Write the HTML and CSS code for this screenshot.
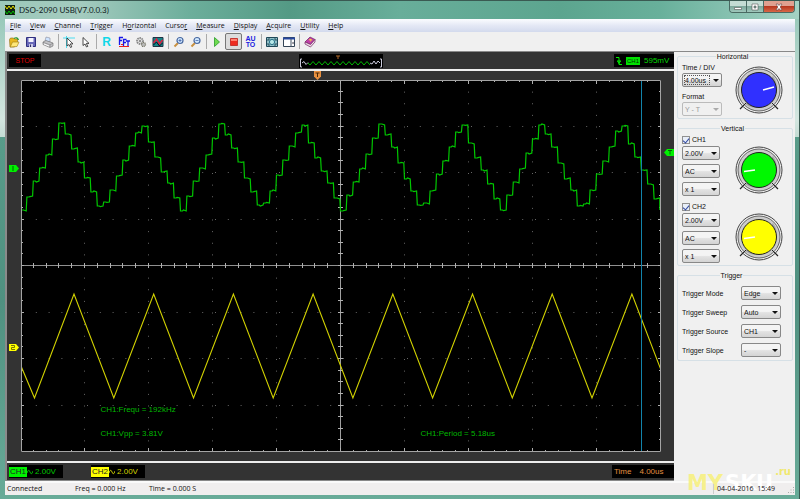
FILE: index.html
```html
<!DOCTYPE html>
<html lang="en">
<head>
<meta charset="utf-8">
<title>DSO-2090 USB(V7.0.0.3)</title>
<link rel="stylesheet" href="styles.css">
</head>
<body>
<div class="window">
  <header class="titlebar">
    <svg class="app-icon" viewBox="0 0 10 10"><rect width="10" height="10" fill="#102010"/><path d="M0 1l2 3 2-3 2 3 2-3 2 3" stroke="#e8e000" fill="none"/><path d="M0 6l2 3 2-3 2 3 2-3 2 3" stroke="#0b0" fill="none"/></svg>
    <h1>DSO-2090 USB(V7.0.0.3)</h1>
    <div class="window-buttons">
      <button aria-label="Minimize"><svg viewBox="0 0 10 8"><path d="M1.500 4.500h7v2h-7z" fill="#fff" stroke="#555" stroke-width=".6"/></svg></button>
      <button aria-label="Maximize"><svg viewBox="0 0 10 8"><path d="M2 1h6v6H2zM4 3h2v2H4z" fill="#fff" fill-rule="evenodd" stroke="#555" stroke-width=".6"/></svg></button>
      <button class="close" aria-label="Close"><svg viewBox="0 0 10 8"><path d="M2 1h2l1 1.500 1-1.500h2L6.200 4 8 7H6L5 5.500 4 7H2l1.800-3z" fill="#fff" stroke="#644" stroke-width=".6"/></svg></button>
    </div>
  </header>

  <nav class="menubar">
    <button><u>F</u>ile</button><button><u>V</u>iew</button><button><u>C</u>hannel</button><button><u>T</u>rigger</button><button>H<u>o</u>rizontal</button><button>Curso<u>r</u></button><button><u>M</u>easure</button><button><u>D</u>isplay</button><button><u>A</u>cquire</button><button><u>U</u>tility</button><button><u>H</u>elp</button>
  </nav>

  <div class="toolbar">
    <button aria-label="Open"><svg viewBox="0 0 12 12"><path d="M1.500 3.500l1-1.500h3l1 1 3 0v3l-3 5H2z" fill="#e8b820" stroke="#8a6a10" stroke-width=".6"/><path d="M2.200 11l2.300-5h6.500L9 10.500z" fill="#ffe878" stroke="#9a7a10" stroke-width=".6"/><path d="M6 2.500q3-2 4.500 1.500" stroke="#2a9a2a" stroke-width="1.200" fill="none"/></svg></button>
    <button aria-label="Save"><svg viewBox="0 0 12 12"><path d="M1.500 1.500h9v9h-9z" fill="#6868b8" stroke="#303080"/><path d="M3.500 2h5v4h-5z" fill="#f4f4ff"/><path d="M4 8h4v3H4z" fill="#c8c8e8"/><path d="M5 8.500h1V11H5z" fill="#303060"/></svg></button>
    <button aria-label="Print"><svg viewBox="0 0 12 12"><path d="M3 5l1-4 4 1 0 4z" fill="#cfe4ff" stroke="#778" stroke-width=".5"/><path d="M1 6l3-1.500 7 2.500v3l-3 1.500-7-3z" fill="#c4c4c8" stroke="#666" stroke-width=".6"/><path d="M1 6.300l7 2.500 3-1.600M8 9v2" stroke="#777" stroke-width=".6" fill="none"/><path d="M2 8l5 2" stroke="#fff"/></svg></button>
    <i class="sep"></i>
    <button aria-label="Cross cursor"><svg viewBox="0 0 12 12"><path d="M0 2h12M3.500 0v12" stroke="#4cdcf0" stroke-width="1"/><path d="M4 2v8l2-1.500 1.500 3 1.300-.6-1.500-3H10z" fill="#fff" stroke="#222" stroke-width=".8"/></svg></button>
    <button aria-label="Pointer"><svg viewBox="0 0 12 12"><path d="M3 1.500v8L5 8l1.500 3 1.300-.6-1.500-3H9z" fill="#fff" stroke="#222" stroke-width=".8"/></svg></button>
    <i class="sep"></i>
    <button class="glyph-r" aria-label="Reference">R</button>
    <button aria-label="FFT"><svg viewBox="0 0 12 12"><path d="M1 1.500h4M1.500 1v8M1.500 4.500h2.500M5 3.500h3.500M5.500 3v7M5.500 6.500H8M8 5h4M10 5v5.500" stroke="#1818e8" stroke-width="1.300" fill="none"/><path d="M1 10.500h10M3 8.500h2" stroke="#e82020" stroke-width="1"/></svg></button>
    <button aria-label="Factory setup"><svg viewBox="0 0 12 12"><circle cx="5" cy="5" r="3" fill="#ddd" stroke="#888" stroke-width="1.800" stroke-dasharray="1.500 .7"/><circle cx="5" cy="5" r="1" fill="#777"/><circle cx="8.500" cy="8.500" r="2" fill="#bbb" stroke="#776" stroke-width="1.200" stroke-dasharray="1 .6"/></svg></button>
    <button aria-label="Waveform"><svg viewBox="0 0 12 12"><path d="M1 1.500h10v9H1z" fill="#148888" stroke="#234"/><path d="M1.500 7l3-4 3 5L10.500 4" stroke="#e02040" stroke-width="1.500" fill="none"/><path d="M1.500 9l3-3 3 4 3-3" stroke="#012" fill="none"/></svg></button>
    <i class="sep"></i>
    <button aria-label="Zoom in"><svg viewBox="0 0 12 12"><path d="M1.500 10.500L5 7" stroke="#c89040" stroke-width="2"/><circle cx="7" cy="4.500" r="3" fill="#d0e8ff" stroke="#4868a0" stroke-width="1.200"/><path d="M5.500 4.500h3M7 3v3" stroke="#3858a0" stroke-width=".7"/></svg></button>
    <button aria-label="Zoom out"><svg viewBox="0 0 12 12"><path d="M1.500 10.500L5 7" stroke="#c89040" stroke-width="2"/><circle cx="7" cy="4.500" r="3" fill="#d0e8ff" stroke="#4868a0" stroke-width="1.200"/><path d="M5.500 4.500h3" stroke="#3858a0" stroke-width=".7"/></svg></button>
    <i class="sep"></i>
    <button aria-label="Run"><svg viewBox="0 0 12 12"><path d="M3.500 1.500v9L8.500 6z" fill="#70dc50" stroke="#289a28" stroke-width=".8"/></svg></button>
    <button class="pressed" aria-label="Stop"><svg viewBox="0 0 12 12"><path d="M2.500 2.500h7v7h-7z" fill="#ee2c20" stroke="#b81410" stroke-width=".7"/><path d="M3 3h6v2H3z" fill="#ff8070"/></svg></button>
    <button class="glyph-auto" aria-label="Auto">AU<br>TO</button>
    <i class="sep"></i>
    <button aria-label="Full view"><svg viewBox="0 0 12 12"><path d="M.5 1.500h11v9H.5z" fill="#90c0c8" stroke="#204858"/><circle cx="6" cy="6" r="2.600" fill="#b8e8e8" stroke="#287088"/><path d="M2 3h2M2 3v2M10 3H8M10 3v2M2 9h2M2 9V7M10 9H8M10 9V7" stroke="#143848" stroke-width=".8"/></svg></button>
    <button aria-label="Side panel"><svg viewBox="0 0 12 12"><path d="M.5 1.500h11v9H.5z" fill="#fff" stroke="#345"/><path d="M0 2.500h12" stroke="#2848a0" stroke-width="2"/><path d="M8 3v8" stroke="#456"/><path d="M9 7l1.500-1.200v2.400z" fill="#223"/></svg></button>
    <i class="sep"></i>
    <button aria-label="Help contents"><svg viewBox="0 0 12 12"><path d="M1 6l5-5 5 2.500-4.500 5z" fill="#c040a8" stroke="#601850" stroke-width=".6"/><path d="M1 6v2l5.500 3L11 6V3.500l-4.500 5z" fill="#f0e0e8" stroke="#702060" stroke-width=".7"/><path d="M5 4l2-.8.5 1-1.500 1" stroke="#ffd840" fill="none"/></svg></button>
  </div>

  <div class="content">
    <main class="scope">
      <div class="bar top-bar">
        <span class="tag stop">STOP</span>
        <svg class="preview" viewBox="0 0 84 14">
          <rect width="84" height="14" fill="#000"/>
          <path id="previewTrace" fill="none" stroke="#0b0" stroke-width="1"/>
          <path d="M3 5H1.500v8H3M81 5h1.500v8H81M3 9l2-1.500 2 3 2-2M71 9l2 1 2-3 2 3 2-3 2 2" stroke="#ccd" fill="none" stroke-width="1"/>
          <path d="M37 2h4M39 2v3" stroke="#b06828" stroke-width="1"/>
        </svg>
        <span class="tag trig">
          <svg viewBox="0 0 6 10"><path d="M0 1.500h3v7h3M1 5h4M1.500 5L3 7.500 4.500 5" stroke="#0e0" fill="none"/></svg>
          <b>CH1</b><span>595mV</span>
        </span>
      </div>
      <section class="display">
        <svg class="graph" viewBox="0 0 640 372" preserveAspectRatio="none">
          <rect width="640" height="372" fill="#000"/>
          <g id="grid"></g>
          <path id="yellowTrace" fill="none" stroke="#d2d200" stroke-width="1.100"/>
          <path id="greenTrace" fill="none" stroke="#00c800" stroke-width="1.200"/>
          <path d="M620.500 0V372" stroke="#1284ac"/>
          <path d="M.5 .5H639.500V371.500H.5z" stroke="#a4a4a4" fill="none"/>
        </svg>
        <svg class="marker position" viewBox="0 0 7 9"><path d="M0 0h7v5.500L3.500 9 0 5.500z" fill="#e89040"/><path d="M1.500 2h4M3.500 2v4" stroke="#4a2a08" fill="none"/></svg>
        <svg class="marker ch1" viewBox="0 0 10 7"><path d="M0 0h7l3 3.500L7 7H0z" fill="#00f000"/><path d="M4 1v5" stroke="#060"/></svg>
        <svg class="marker ch2" viewBox="0 0 10 7"><path d="M0 0h7l3 3.500L7 7H0z" fill="#ff0"/><path d="M2 1.500h3.500v2H2.500v2H6" stroke="#660" fill="none" stroke-width=".9"/></svg>
        <svg class="marker level" viewBox="0 0 10 7"><path d="M10 0H3L0 3.500 3 7h7z" fill="#00f000"/><path d="M4 1.500h4M6 1.500v4" stroke="#060" fill="none"/></svg>
        <span class="reading frequency">CH1:Frequ = 192kHz</span>
        <span class="reading lower vpp">CH1:Vpp = 3.81V</span>
        <span class="reading lower period">CH1:Period = 5.18us</span>
      </section>
      <div class="bar bottom-bar">
        <span class="tag channel green"><b>CH1</b><svg viewBox="0 0 6 6"><path d="M0 4q1.500-5 3-1t3-1" stroke="currentColor" fill="none" stroke-width=".9"/></svg><span>2.00V</span></span>
        <span class="tag channel yellow"><b>CH2</b><svg viewBox="0 0 6 6"><path d="M0 4q1.500-5 3-1t3-1" stroke="currentColor" fill="none" stroke-width=".9"/></svg><span>2.00V</span></span>
        <span class="tag time"><span>Time</span><span>4.00us</span></span>
      </div>
    </main>

    <aside class="panel">
      <svg class="defs" aria-hidden="true"><defs>
        <g id="dial">
          <path d="M38 38l5 5M10 38l-5 5" stroke="#222" stroke-width="1.200"/>
          <circle cx="24" cy="24" r="23" fill="#f0f0f0" stroke="#444" stroke-width="1"/>
          <circle cx="24" cy="24" r="21" fill="#ccc" stroke="#666" stroke-width="1"/>
          <path d="M38 10A20 20 0 0 1 10 38z" fill="#aaa"/>
          <path d="M7 41l4-4M41 41l-4-4" stroke="#222"/>
        </g>
      </defs></svg>
      <fieldset>
        <legend>Horizontal</legend>
        <div class="control-row">
          <div class="stack timing">
            <label for="timediv">Time / DIV</label>
            <span class="pick focused"><select id="timediv"><option>4.00us</option></select></span>
            <label class="second" for="format">Format</label>
            <span class="pick disabled"><select id="format" disabled><option>Y - T</option></select></span>
          </div>
          <svg class="knob" viewBox="0 0 48 48"><use href="#dial"/><circle cx="24" cy="24" r="17.500" fill="#3030ff" stroke="#222"/><path d="M28 24l11-3" stroke="#fff" stroke-width="1.500"/></svg>
        </div>
      </fieldset>
      <fieldset>
        <legend>Vertical</legend>
        <div class="control-row">
          <div class="stack">
            <label class="check"><input type="checkbox" checked>CH1</label>
            <span class="pick"><select aria-label="CH1 volts"><option>2.00V</option></select></span>
            <span class="pick"><select aria-label="CH1 coupling"><option>AC</option></select></span>
            <span class="pick"><select aria-label="CH1 probe"><option>x 1</option></select></span>
          </div>
          <svg class="knob" viewBox="0 0 48 48"><use href="#dial"/><circle cx="24" cy="24" r="17.500" fill="#00f800" stroke="#222"/><path d="M9 25.500l11-1.500" stroke="#fff" stroke-width="1.500"/></svg>
        </div>
        <div class="control-row">
          <div class="stack">
            <label class="check"><input type="checkbox" checked>CH2</label>
            <span class="pick"><select aria-label="CH2 volts"><option>2.00V</option></select></span>
            <span class="pick"><select aria-label="CH2 coupling"><option>AC</option></select></span>
            <span class="pick"><select aria-label="CH2 probe"><option>x 1</option></select></span>
          </div>
          <svg class="knob" viewBox="0 0 48 48"><use href="#dial"/><circle cx="24" cy="24" r="17.500" fill="#ff0" stroke="#222"/><path d="M9 25.500l11-1.500" stroke="#fff" stroke-width="1.500"/></svg>
        </div>
      </fieldset>
      <fieldset class="trigger">
        <legend>Trigger</legend>
        <div class="field"><label for="mode">Trigger Mode</label><span class="pick"><select id="mode"><option>Edge</option></select></span></div>
        <div class="field"><label for="sweep">Trigger Sweep</label><span class="pick"><select id="sweep"><option>Auto</option></select></span></div>
        <div class="field"><label for="source">Trigger Source</label><span class="pick"><select id="source"><option>CH1</option></select></span></div>
        <div class="field"><label for="slope">Trigger Slope</label><span class="pick"><select id="slope"><option>-</option></select></span></div>
      </fieldset>
    </aside>
  </div>

  <footer class="status">
    <span class="connection">Connected</span>
    <span class="freq">Freq = 0.000 Hz</span>
    <span>Time = 0.000 S</span>
    <time>04-04-2016&nbsp; 15:49</time>
    <svg class="grip" viewBox="0 0 8 8"><path d="M6 1h1v1H6zM6 3.500h1v1H6zM6 6h1v1H6zM3.500 3.500h1v1h-1zM3.500 6h1v1h-1zM1 6h1v1H1z" fill="#aaa"/></svg>
  </footer>
  <div class="watermark"><span class="my">MY</span><span class="sku">SKU</span><span class="ru">.ru</span></div>
</div>
<script src="script.js"></script>
</body>
</html>
```
FILE: styles.css
```css
* { box-sizing: border-box; }
body {
  margin: 0;
  font: 7px/9px "Liberation Sans", Arial, sans-serif;
  color: #111;
}
button, select, input { font: inherit; color: inherit; margin: 0; padding: 0; }
.window {
  position: relative;
  display: flex;
  flex-direction: column;
  min-height: 100vh;
  padding: 0 4px 4px 5px;
  border: 1px solid #3a5a52;
  border-width: 1px 1px 1px 0;
  background:
    linear-gradient(#8fc4b4, #d4e6e0 118px, #c4dcd4 136px, transparent 136px) left / 5px 100% no-repeat,
    linear-gradient(#8fc4b4, #d4e6e0 118px, #c4dcd4 136px, transparent 136px) right / 5px 100% no-repeat,
    linear-gradient(#5fa692, #4f9080 60%, #68ab98);
}

.titlebar {
  display: flex;
  align-items: center;
  height: 18px;
  margin: 0 -4px 0 -5px;
  padding-left: 5px;
  background: linear-gradient(90deg, #9cc8ba, #a4cbbf 80px, #6cae9b 190px, #549a85 290px, #68ae9a 400px, #5ca58f 560px, #68b09b 660px, #a4d2c4);
}
.app-icon { width: 10px; height: 10px; }
h1 { margin: 0 0 0 4px; font: 8px/12px Lato, sans-serif; color: #10201c; }
.window-buttons {
  display: flex;
  align-self: flex-start;
  height: 12px;
  margin-left: auto;
  margin-right: 4px;
  border: 1px solid #4a6a62;
  border-top: 0;
  border-radius: 0 0 4px 4px;
  overflow: hidden;
}
.window-buttons button {
  display: grid;
  place-items: center;
  width: 17px;
  border: 0;
  border-right: 1px solid #4a6a62;
  background: linear-gradient(#c4dcd4 45%, #7ea89c 50%, #a0c8bc);
}
.window-buttons svg { width: 10px; height: 8px; }
.window-buttons .close { width: 30px; border: 0; background: linear-gradient(#e0a090 45%, #b83820 50%, #d86848); }

.menubar {
  display: flex;
  gap: 9px;
  height: 13px;
  padding: 0 5px;
  background: linear-gradient(#fbfcff, #e4e8f5 50%, #d3daed);
}
.menubar button { border: 0; background: none; font: 7px/12px "Open Sans", sans-serif; }
.menubar u { text-underline-offset: 1px; }

.toolbar { display: flex; align-items: center; height: 19px; background: #f0f0f0; }
.toolbar button { display: grid; place-items: center; width: 17px; height: 17px; border: 0; background: none; }
.toolbar svg { width: 12px; height: 12px; }
.toolbar .pressed { border: 1px solid #777; border-radius: 2px; background: #dcdcdc; }
.sep { width: 1px; height: 15px; margin: 0 1px 0 2px; background: #aaa; }
.toolbar .glyph-r { font: bold 12px/12px "Liberation Sans", sans-serif; color: #10d8e8; }
.toolbar .glyph-auto { font: bold 7px/6px "Liberation Sans", sans-serif; color: #2020e0; }

.content { display: flex; flex: 1; background: #f0f0f0; border-top: 1px solid #888; }
.scope {
  display: flex;
  flex: 1;
  flex-direction: column;
  min-width: 0;
  border-left: 2px solid #8a8a8a;
  border-bottom: 1px solid #888;
}
.bar { display: flex; align-items: center; height: 17px; background: #333; }
.tag { display: flex; align-items: center; height: 13px; background: #000; font-size: 8px; }
.top-bar { justify-content: space-between; padding-left: 2px; }
.stop { width: 32px; justify-content: center; color: #e00000; font-size: 7px; }
.preview { width: 84px; height: 14px; margin-left: 27px; }
.trig { width: 60px; gap: 4px; padding-left: 2px; color: #00d800; }
.trig svg { width: 6px; height: 10px; }
.trig b { padding: 0 1px; background: #00e000; color: #003000; font: 6px/8px "Liberation Sans", sans-serif; }
.display {
  position: relative;
  display: flex;
  flex: 1;
  padding: 9px 13px 9px 14px;
  border-top: 2px solid #eee;
  border-bottom: 2px solid #eee;
  background: #333;
}
.graph { display: block; flex: 1; width: 100%; min-width: 0; height: auto; }
.marker { position: absolute; width: 10px; height: 7px; }
.position { left: 46%; top: 0; width: 7px; height: 9px; }
.ch1 { left: 2px; top: 24%; }
.ch2 { left: 2px; top: 70%; }
.level { right: 0; top: 20%; }
.reading { position: absolute; font-size: 8px; color: #00b800; }
.frequency { left: 14%; bottom: 12%; }
.lower { bottom: 6%; }
.vpp { left: 14%; }
.period { left: 62%; }
.bottom-bar { padding-left: 2px; gap: 28px; }
.channel { width: 54px; }
.channel b { padding: 0 1px; line-height: 10px; font-weight: normal; color: #222; }
.channel svg { width: 6px; height: 6px; margin-right: 2px; }
.green { color: #00c800; }
.green b { background: #00f000; }
.yellow { color: #d4d400; }
.yellow b { background: #ff0; }
.time { width: 62px; margin-left: auto; gap: 8px; padding-left: 2px; color: #e09040; }

.panel { display: flex; flex-direction: column; gap: 5px; width: 121px; padding: 0 2px 0 3px; }
.defs { position: absolute; width: 0; height: 0; }
fieldset { min-width: 0; margin: 0; padding: 0 9px 2px 4px; border: 1px solid #d6e0e6; border-radius: 2px; }
legend { margin: 0 auto; padding: 0 1px; line-height: 9px; }
.control-row { display: flex; justify-content: space-between; align-items: flex-end; padding-top: 2px; }
.control-row + .control-row { padding-top: 6px; }
.stack { display: flex; flex-direction: column; gap: 4px; width: 38px; }
.timing { gap: 1px; width: 40px; }
.timing .second { margin-top: 4px; }
.stack label { white-space: nowrap; }
.check { display: flex; align-items: center; gap: 2px; height: 9px; margin-bottom: -2px; }
.check input {
  appearance: none;
  width: 8px;
  height: 8px;
  border: 1px solid #909090;
  background: #e8eef8;
  display: grid;
  place-items: center;
}
.check input:checked::after {
  content: "";
  width: 3px;
  height: 5px;
  border: solid #3048a0;
  border-width: 0 1px 1px 0;
  transform: rotate(40deg);
}
.pick { position: relative; display: block; height: 14px; }
.pick select {
  display: block;
  appearance: none;
  width: 100%;
  height: 14px;
  padding: 0 2px;
  border: 1px solid #888;
  border-radius: 2px;
  background: linear-gradient(#f4f4f4 45%, #e2e2e2 55%, #d4d4d4);
}
.pick::after {
  content: "";
  position: absolute;
  right: 3px;
  top: 6px;
  border: solid transparent;
  border-width: 3px 3px 0;
  border-top-color: #111;
  pointer-events: none;
}
.focused::before { content: ""; position: absolute; inset: 2px 12px 2px 2px; border: 1px dotted #555; pointer-events: none; }
.pick select:disabled { color: #999; opacity: 1; border-color: #bbb; background: #f0f0f0; }
.disabled::after { border-top-color: #aaa; }
.knob { width: 48px; height: 48px; margin-bottom: 2px; }
.trigger { padding: 6px 11px 3px 4px; }
.field { display: flex; align-items: center; justify-content: space-between; }
.field + .field { margin-top: 5px; }
.field .pick { width: 40px; }

.status {
  display: flex;
  align-items: center;
  height: 14px;
  padding-left: 2px;
  border-top: 2px solid #fafafa;
  background: #f0eeee;
  font: 7px/10px "Open Sans", sans-serif;
}
.connection { flex: 0 0 68px; }
.freq { flex: 0 0 74px; }
.status time { position: relative; z-index: 2; margin-left: auto; padding-left: 3px; border-left: 1px solid #ccc; }
.grip { width: 8px; height: 8px; margin: 2px 0 0 12px; }
.watermark {
  position: absolute;
  right: 8px;
  bottom: 5px;
  display: flex;
  align-items: flex-end;
  gap: 2px;
  font: bold 21px/22px "DejaVu Sans", sans-serif;
  pointer-events: none;
}
.my { color: #f6f08c; }
.sku { color: #fff; }
.ru { margin-bottom: 18px; font-size: 10px; line-height: 8px; color: #f0e870; }
```
FILE: script.js
```js
// Graticule: 10 x 8 divisions, five minor steps across and four down.
const W = 640, H = 372, DX = 64, DY = 46.5;
const grid = [];
const line = (d, color, dash) =>
  grid.push(`<path d="${d}" stroke="${color}" fill="none"${dash ? ` stroke-dasharray="${dash}"` : ""}/>`);

for (let i = 1; i < 10; i++) {
  if (i !== 5) line(`M${i * DX - 0.5} 0V${H}`, "#666", "1 10.625");
}
for (let j = 1; j < 8; j++) {
  if (j !== 4) line(`M2 ${Math.round(j * DY) - 0.5}H${W}`, "#666", "1 11.8");
}
line(`M319.5 0V${H}`, "#a0a0a0");
line(`M0 185.5H${W}`, "#909090");

let ticks = "";
for (let i = 1; i < 50; i++) {
  const x = Math.round(i * 12.8) - 0.5;
  const n = i % 5 ? 2 : 4;
  ticks += `M${x} 0v${n}M${x} ${H}v-${n}M${x} 183v5`;
}
for (let j = 1; j < 32; j++) {
  const y = Math.round(j * 11.625) - 0.5;
  const n = j % 4 ? 2 : 3;
  ticks += `M0 ${y}h${n}M${W} ${y}h-${n}M317 ${y}h5`;
}
line(ticks, "#b0b0b0");
document.getElementById("grid").innerHTML = grid.join("");

// Channel 1: sampled staircase, 25 samples per two signal periods.
const levels = [130, 116, 102, 88, 74, 59, 44, 54, 68, 83, 98, 111, 126,
  123, 110, 95, 81, 66, 52, 46, 63, 77, 91, 104, 118];
const jitter = [0, 1, -1, 0, 1, 0, -1];
let green = "M0 130";
for (let k = 0; k < 100; k++) {
  const x = k * 6.4 - 1, y = levels[k % 25];
  green += `L${Math.max(x + 0.5, 0)} ${y + jitter[k % 7]}h2L${x + 3.5} ${y + jitter[(k + 3) % 7] * 0.7}L${x + 6.2} ${y - jitter[(k + 2) % 7]}`;
}
green += "V130";
document.getElementById("greenTrace").setAttribute("d", green);

// Channel 2: triangle wave.
let yellow = "M0 286L13.5 318";
for (let k = 0; k < 8; k++) {
  const x = 53 + k * 79.7;
  yellow += `L${x} 214L${x + 39.8} 318`;
}
document.getElementById("yellowTrace").setAttribute("d", yellow);

let preview = "M9 9";
for (let x = 11, up = true; x < 73; x += 3, up = !up) preview += `L${x} ${up ? 11 : 7.5}`;
document.getElementById("previewTrace").setAttribute("d", preview);
```
